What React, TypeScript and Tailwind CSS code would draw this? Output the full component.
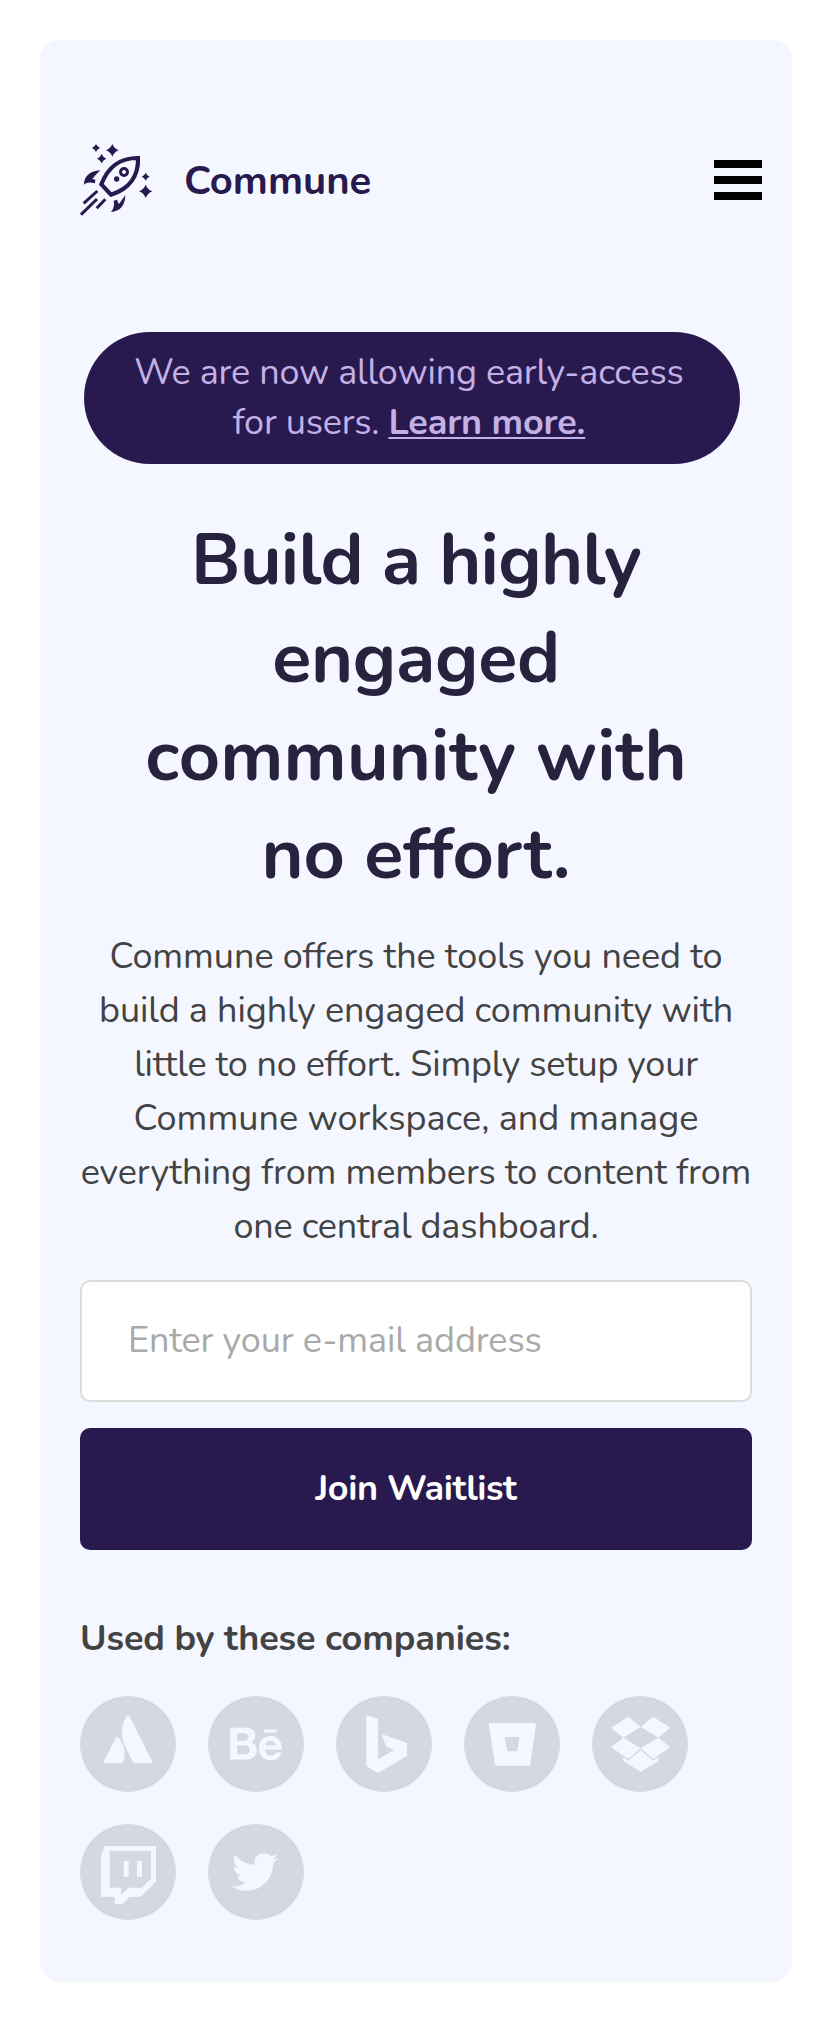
import { FaBehance, FaTwitter } from "react-icons/fa";
import type { ReactNode } from "react";

function Star({ x, y, r }: { x: number; y: number; r: number }) {
  const k = r * 0.28;
  return (
    <path
      d={`M${x} ${y - r}Q${x + k} ${y - k} ${x + r} ${y}Q${x + k} ${y + k} ${x} ${y + r}Q${x - k} ${y + k} ${x - r} ${y}Q${x - k} ${y - k} ${x} ${y - r}Z`}
    />
  );
}

function Rocket() {
  return (
    <svg viewBox="30 42 216 216" className="size-[72px] shrink-0" fill="#28194e">
      <Star x={78} y={54} r={12} />
      <Star x={127} y={61} r={19} />
      <Star x={95} y={86} r={14} />
      <Star x={227} y={140} r={12} />
      <Star x={227} y={184} r={20} />
      <path
        d="M204 84C150 84 115 108 94 163L123 194C180 176 206 135 204 84Z"
        fill="none"
        stroke="#28194e"
        strokeWidth="12.5"
      />
      <circle cx="162" cy="126" r="10.5" fill="none" stroke="#28194e" strokeWidth="9" />
      <circle cx="140" cy="147" r="8" />
      <path d="M91 121C60 123 42 138 42 164C50 156 60 156 75 160L76 149L67 147C74 138 82 130 91 121Z" />
      <path d="M166 196C165 228 150 244 123 246C131 236 134 225 131 212L141 209L146 222C154 214 158 206 166 196Z" />
      <path
        d="M82 183L41 220M81 207L33 254M106 208L80 235"
        fill="none"
        stroke="#28194e"
        strokeWidth="9"
      />
    </svg>
  );
}

function Badge({ children }: { children: ReactNode }) {
  return (
    <li className="flex size-24 items-center justify-center rounded-full bg-[#d5d8e1] text-[#f4f7ff]">
      {children}
    </li>
  );
}

function Glyph({ children }: { children: ReactNode }) {
  return (
    <svg viewBox="0 0 96 96" className="size-24" fill="currentColor">
      {children}
    </svg>
  );
}

export default function App() {
  return (
    <div className="h-[2022px] bg-white py-10 pr-9 pl-10 font-['Nunito','Lato',sans-serif]">
      <main className="h-[1942px] rounded-[20px] bg-[#f4f7ff] px-10 pt-[104px]">
        <header className="flex h-[72px] items-center">
          <Rocket />
          <span className="ml-8 pt-0.5 text-[40px] leading-[54px] font-bold text-[#28194e]">
            Commune
          </span>
          <button aria-label="Menu" className="-mr-2.5 ml-auto flex w-12 flex-col gap-2">
            <span className="h-2 bg-black" />
            <span className="h-2 bg-black" />
            <span className="h-2 bg-black" />
          </button>
        </header>

        <p className="mt-[116px] ml-1 flex h-[132px] w-[656px] flex-col justify-center rounded-full bg-[#28194e] pr-1.5 text-center text-[36px] leading-[50px] tracking-[-0.18px] text-[#c3b1e6]">
          <span>We are now allowing early-access</span>
          <span>
            for users.{" "}
            <a className="font-bold underline decoration-2 underline-offset-[3px] [text-decoration-skip-ink:none]">
              Learn more.
            </a>
          </span>
        </p>

        <h1 className="mt-[47px] text-center text-[72px] leading-[98px] font-bold text-[#28223f]">
          <span className="block tracking-[-0.71px]">Build a highly</span>
          <span className="block tracking-[-0.3px]">engaged</span>
          <span className="block tracking-[0.16px]">community with</span>
          <span className="block tracking-[-0.13px]">no effort.</span>
        </h1>

        <p className="mt-[27px] text-center text-[36px] leading-[54px] whitespace-nowrap text-[#434343]">
          <span className="block tracking-[-0.066px]">Commune offers the tools you need to</span>
          <span className="block tracking-[-0.075px]">build a highly engaged community with</span>
          <span className="block tracking-[-0.22px]">little to no effort. Simply setup your</span>
          <span className="block tracking-[0.03px]">Commune workspace, and manage</span>
          <span className="block tracking-[-0.1px]">everything from members to content from</span>
          <span className="block tracking-[-0.17px]">one central dashboard.</span>
        </p>

        <input
          placeholder="Enter your e-mail address"
          className="mt-[26px] block h-[122px] w-full rounded-[10px] border-2 border-[#dcdcdc] bg-white px-[46px] pb-0.5 text-[36px] tracking-[-0.1px] placeholder:text-[#a9a9a9]"
        />
        <button className="mt-[26px] block h-[122px] w-full rounded-[10px] bg-[#28194e] text-[36px] font-bold tracking-[-0.42px] text-white">
          Join Waitlist
        </button>

        <h2 className="mt-16 text-[36px] leading-[50px] font-bold tracking-[-0.11px] text-[#434343]">
          Used by these companies:
        </h2>
        <ul className="mt-8 flex flex-wrap gap-8">
          <Badge>
            <Glyph>
              <path
                transform="translate(24 19) scale(2)"
                d="M7.12 11.084a.683.683 0 00-1.16.126L.075 22.974a.703.703 0 00.63 1.018h8.19a.678.678 0 00.63-.39c1.767-3.65.696-9.203-2.406-12.52zM11.434.386a15.515 15.515 0 00-.906 15.317l3.95 7.9a.703.703 0 00.628.388h8.19a.703.703 0 00.63-1.017L12.63.38a.664.664 0 00-1.196.006z"
              />
            </Glyph>
          </Badge>
          <Badge>
            <FaBehance className="h-[46px] w-[52px]" />
          </Badge>
          <Badge>
            <Glyph>
              <path d="M30.3 19L42 23V63.3L58 54L50.3 50.3L45.3 38L71 47V60L42 77L30.3 70.3Z" />
            </Glyph>
          </Badge>
          <Badge>
            <Glyph>
              <path
                fillRule="evenodd"
                d="M25.7 27H71.2Q72.2 27 72 28L66.2 68.5Q66 69.7 65 69.7H32.2Q31.2 69.7 31 68.5L24.8 28Q24.7 27 25.7 27ZM40.7 41L43.3 55.3H53.2L55.4 41Z"
              />
            </Glyph>
          </Badge>
          <Badge>
            <Glyph>
              <path d="M19 31.7L36.3 20.7L48.7 31L31.3 41.7ZM48.7 31L61 20.7L78.3 31.7L66.3 41.7ZM19 51.3L31.3 41.7L48.7 52.3L36.3 63ZM48.7 52.3L66.3 41.7L78.3 51.3L61 63ZM31.3 61.3L36.3 64.7L48.7 54.3L61 64.7L66.3 61.3V65.3L48.7 75.7L31.3 65.3Z" />
            </Glyph>
          </Badge>
          <Badge>
            <Glyph>
              <path
                fillRule="evenodd"
                d="M24.7 22H76V57.3L61 72.7H49.7L42.3 80H34.7V72.7H21V31.7ZM29.7 26.7V63.7H41V71L48.7 63.7H62L71 54.7V26.7ZM43.7 37H48.7V52.7H43.7ZM57 37H62V52.7H57Z"
              />
            </Glyph>
          </Badge>
          <Badge>
            <FaTwitter className="mr-0.5 mb-px size-[46px]" />
          </Badge>
        </ul>
      </main>
    </div>
  );
}
